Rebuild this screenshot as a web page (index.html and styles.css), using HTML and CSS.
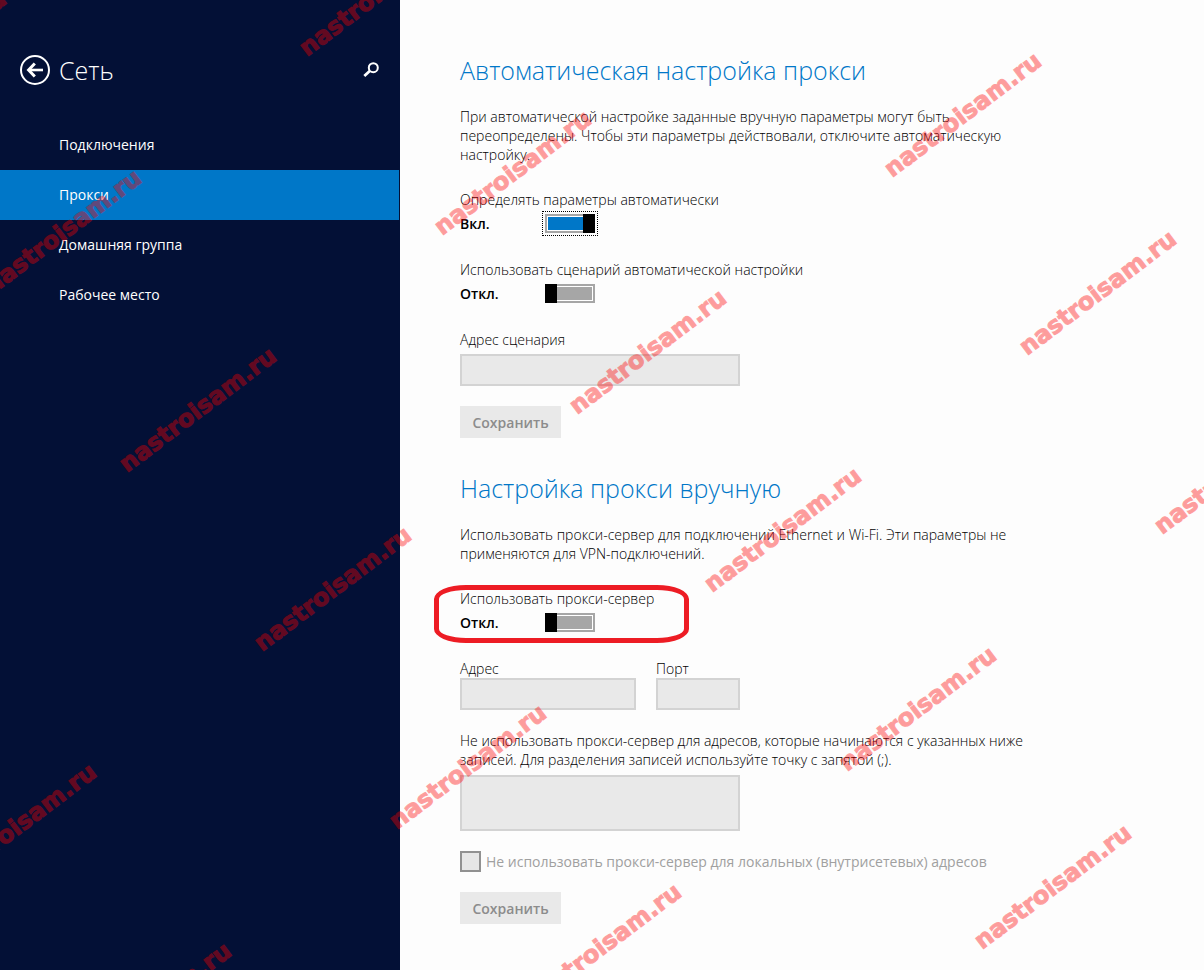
FILE: index.html
```html
<!DOCTYPE html>
<html lang="ru">
<head>
<meta charset="utf-8">
<title>Сеть — Прокси</title>
<link rel="stylesheet" href="styles.css">
</head>
<body>
<div class="app">
  <aside class="sidebar">
    <header class="sidebar-header">
      <button class="icon-button" type="button" aria-label="Назад">
        <svg width="30" height="30" viewBox="0 0 30 30" fill="none" stroke="#fff">
          <circle cx="15" cy="15" r="14" stroke-width="2"/>
          <path d="M9 15h14" stroke-width="2.6"/>
          <path d="M14.8 8.500L8.600 15l6.200 6.500" stroke-width="3"/>
        </svg>
      </button>
      <h1 class="title">Сеть</h1>
      <button class="icon-button" type="button" aria-label="Поиск">
        <svg width="16" height="16" viewBox="0 0 16 16" fill="none" stroke="#fff">
          <circle cx="10.300" cy="5.700" r="4.500" stroke-width="2"/>
          <path d="M7 8.800L1.300 14" stroke-width="2.800"/>
        </svg>
      </button>
    </header>
    <nav class="nav">
      <a class="nav-item" href="#connections">Подключения</a>
      <a class="nav-item nav-item-active" href="#proxy" aria-current="page">Прокси</a>
      <a class="nav-item" href="#homegroup">Домашняя группа</a>
      <a class="nav-item" href="#workplace">Рабочее место</a>
    </nav>
  </aside>

  <main class="content">
    <section class="section">
      <h2 class="heading">Автоматическая настройка прокси</h2>
      <p class="text">При автоматической настройке заданные вручную параметры могут быть<br>переопределены. Чтобы эти параметры действовали, отключите автоматическую<br>настройку.</p>
      <div class="setting">
        <label for="detect">Определять параметры автоматически</label>
        <div class="switch-row">
          <span class="state">Вкл.</span>
          <input class="switch switch-focused" id="detect" type="checkbox" role="switch" checked>
        </div>
      </div>
      <div class="setting">
        <label for="script">Использовать сценарий автоматической настройки</label>
        <div class="switch-row">
          <span class="state">Откл.</span>
          <input class="switch" id="script" type="checkbox" role="switch">
        </div>
      </div>
      <div class="setting">
        <label for="script-url">Адрес сценария</label>
        <input class="field field-spaced" id="script-url" type="text" disabled>
      </div>
      <button class="save" type="button" disabled>Сохранить</button>
    </section>

    <section class="section">
      <h2 class="heading">Настройка прокси вручную</h2>
      <p class="text">Использовать прокси-сервер для подключений Ethernet и Wi-Fi. Эти параметры не<br>применяются для VPN-подключений.</p>
      <div class="setting highlighted">
        <label for="use-proxy">Использовать прокси-сервер</label>
        <div class="switch-row">
          <span class="state">Откл.</span>
          <input class="switch" id="use-proxy" type="checkbox" role="switch">
        </div>
      </div>
      <div class="setting address-row">
        <div class="address">
          <label for="address">Адрес</label>
          <input class="field" id="address" type="text" disabled>
        </div>
        <div class="port">
          <label for="port">Порт</label>
          <input class="field" id="port" type="text" disabled>
        </div>
      </div>
      <div class="exceptions">
        <label for="exceptions">Не использовать прокси-сервер для адресов, которые начинаются с указанных ниже<br>записей. Для разделения записей используйте точку с запятой (;).</label>
        <textarea class="field area" id="exceptions" disabled></textarea>
      </div>
      <div class="check-row">
        <input class="check" id="local" type="checkbox" disabled>
        <label for="local">Не использовать прокси-сервер для локальных (внутрисетевых) адресов</label>
      </div>
      <button class="save" type="button" disabled>Сохранить</button>
    </section>
  </main>

  <svg class="watermarks" aria-hidden="true">
    <defs><text id="mark" class="mark" transform="rotate(-37)">nastroisam.ru</text></defs>
    <use href="#mark" x="-143" y="116"/>
    <use href="#mark" x="307" y="57"/>
    <use href="#mark" x="-8" y="295"/>
    <use href="#mark" x="442" y="236"/>
    <use href="#mark" x="892" y="178"/>
    <use href="#mark" x="127" y="473"/>
    <use href="#mark" x="577" y="415"/>
    <use href="#mark" x="1027" y="356"/>
    <use href="#mark" x="262" y="652"/>
    <use href="#mark" x="712" y="593"/>
    <use href="#mark" x="1162" y="535"/>
    <use href="#mark" x="-53" y="889"/>
    <use href="#mark" x="397" y="830"/>
    <use href="#mark" x="847" y="772"/>
    <use href="#mark" x="82" y="1068"/>
    <use href="#mark" x="532" y="1009"/>
    <use href="#mark" x="982" y="950"/>
  </svg>
</div>
</body>
</html>
```
FILE: styles.css
```css
* {
  box-sizing: border-box;
}

body {
  margin: 0;
  background: #fdfdfd;
  color: #000;
  font: 14px/19px "Open Sans", "Noto Sans", sans-serif;
}

.app {
  position: relative;
  display: flex;
  min-height: 100vh;
}

.sidebar {
  flex: 0 0 400px;
  padding-top: 50px;
  background: #031036;
  color: #fff;
}

.sidebar-header {
  display: flex;
  align-items: center;
  gap: 9px;
  height: 40px;
  margin-bottom: 30px;
  padding: 0 21px 0 20px;
}

.icon-button {
  display: flex;
  padding: 0;
  border: 0;
  background: none;
}

.title {
  flex: 1;
  margin: 0;
  font-size: 25px;
  font-weight: 300;
  line-height: 36px;
}

.nav {
  display: flex;
  flex-direction: column;
}

.nav-item {
  margin-right: 1px;
  padding-left: 59px;
  color: #fff;
  line-height: 50px;
  text-decoration: none;
}

.nav-item-active {
  background: #0077c8;
}

.content {
  flex: 1;
  padding: 52px 60px 46px;
  font-weight: 300;
}

.section + .section {
  margin-top: 32px;
}

.heading {
  margin: 0 0 19px;
  color: #0077c8;
  font-size: 25px;
  font-weight: 300;
  line-height: 36px;
}

.text {
  margin: 0 0 26px;
}

.setting {
  margin-bottom: 27px;
}

.setting label,
.exceptions label {
  display: block;
}

.switch-row {
  display: flex;
  align-items: center;
  margin-top: 5px;
}

.state {
  width: 85px;
  font-weight: 600;
}

.switch {
  width: 50px;
  height: 19px;
  margin: 0;
  appearance: none;
  background:
    linear-gradient(#000, #000) left / 12px 100% no-repeat,
    linear-gradient(#a6a6a6, #a6a6a6) center / calc(100% - 6px) calc(100% - 6px) no-repeat,
    linear-gradient(#fff, #fff) center / calc(100% - 4px) calc(100% - 4px) no-repeat,
    #a6a6a6;
}

.switch:checked {
  background:
    linear-gradient(#000, #000) right / 12px 100% no-repeat,
    linear-gradient(#0077c8, #0077c8) center / calc(100% - 6px) calc(100% - 6px) no-repeat,
    linear-gradient(#fff, #fff) center / calc(100% - 4px) calc(100% - 4px) no-repeat,
    #a6a6a6;
}

.switch-focused {
  outline: 1px dotted #000;
  outline-offset: 2px;
}

.field {
  display: block;
  width: 100%;
  max-width: 280px;
  height: 32px;
  padding: 4px 8px;
  border: 2px solid #d3d3d3;
  border-radius: 0;
  background: #e9e9e9;
  font: inherit;
}

.field-spaced {
  margin-top: 5px;
}

.setting:has(.field-spaced) {
  margin-bottom: 20px;
}

.area {
  height: 56px;
  margin-top: 6px;
  resize: none;
}

.save {
  display: block;
  min-width: 101px;
  height: 32px;
  padding: 0 12px;
  border: 0;
  background: #e9e9e9;
  color: #8c8c8c;
  font: inherit;
  font-weight: 600;
}

.highlighted {
  position: relative;
}

.highlighted::after {
  position: absolute;
  top: -4px;
  left: -26px;
  box-sizing: border-box;
  width: 255px;
  height: 58px;
  border: 5px solid #ed1c24;
  border-radius: 32px / 14px;
  content: "";
  pointer-events: none;
}

.address-row {
  display: flex;
  gap: 20px;
  margin-bottom: 21px;
}

.address {
  width: 176px;
}

.port {
  width: 84px;
}

.check-row {
  display: flex;
  align-items: center;
  gap: 5px;
  margin: 20px 0;
  color: #a0a0a0;
  font-weight: 400;
}

.check {
  width: 21px;
  height: 21px;
  margin: 0;
  appearance: none;
  border: 2px solid #919191;
  background: #e6e6e6;
}

.watermarks {
  position: absolute;
  inset: 0;
  width: 100%;
  height: 100%;
  overflow: hidden;
  pointer-events: none;
}

.mark {
  fill: #f00;
  stroke: #f00;
  stroke-width: 1px;
  opacity: 0.38;
  font-family: "DejaVu Sans", sans-serif;
  font-size: 24px;
  font-weight: 700;
}
```
